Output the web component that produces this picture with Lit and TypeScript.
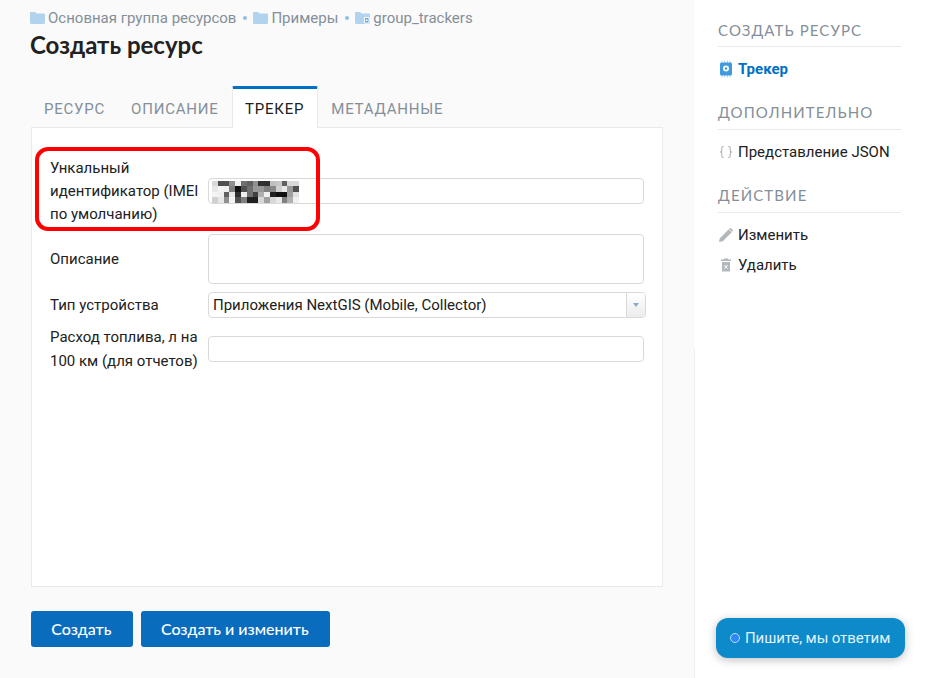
import { LitElement, html, css, svg } from 'lit';
import { customElement } from 'lit/decorators.js';

// hand-picked grey levels for the blurred IMEI value
const BLUR = [
  0xd8, 0x50, 0x50, 0x90, 0xf0, 0x70, 0x60, 0x90, 0x30, 0x30, 0xc0, 0xc8, 0x60, 0xd8, 0xd8,
  0xe8, 0xf4, 0xf0, 0x80, 0x10, 0x50, 0x70, 0x98, 0x98, 0x80, 0x88, 0xd0, 0xe8, 0x98, 0x50,
  0xf4, 0xf0, 0x60, 0xe8, 0x30, 0xf0, 0x70, 0x40, 0xb0, 0xf0, 0x20, 0x10, 0x10, 0xa0, 0xe0,
  0xd0, 0xe8, 0x90, 0xf4, 0x50, 0x80, 0x20, 0x20, 0xd8, 0xa0, 0xd8, 0xe8, 0x80, 0xb0, 0xf0,
];

const folder = (badge = false) => html`<svg class="crumb-icon" viewBox="0 0 15 12">
  <path d="M0 1.2C0 .5.5 0 1.2 0h4l1.3 1.6h7.3c.7 0 1.2.5 1.2 1.2v8c0 .7-.5 1.2-1.2 1.2H1.2C.5 12 0 11.5 0 10.8z" fill="#b1d3ee"/>
  ${badge ? svg`<rect x="9" y="5" width="5.5" height="6.5" rx="1" fill="#fff"/><rect x="10" y="6" width="3.5" height="4.5" fill="#5ea7de"/><circle cx="11.7" cy="8.2" r="1" fill="#fff"/>` : ''}
</svg>`;

@customElement('app-root')
export class AppRoot extends LitElement {
  static styles = css`
    :host {
      display: block;
      height: 678px;
      overflow: hidden;
      background: #fff;
      font-family: Roboto, sans-serif;
      font-size: 15px;
      color: #212121;
    }
    .page { display: flex; height: 678px; position: relative; }
    .main {
      width: 694px;
      box-sizing: border-box;
      background: #fafafa;
      padding: 9px 31px 0 31px;
      position: relative;
    }
    .main::after {
      content: '';
      position: absolute;
      right: -1px;
      top: 349px;
      bottom: 0;
      width: 1px;
      background: #eee;
    }
    .crumbs {
      display: flex;
      align-items: center;
      height: 18px;
      margin-left: -1px;
      font-size: 15px;
      color: #848f99;
    }
    .crumb-icon { width: 15px; height: 12px; margin-right: 3px; flex: none; }
    .sep { width: 4px; height: 4px; border-radius: 50%; background: #8fc0e6; margin: 0 6px 0 7px; }
    h1 {
      margin: 3px 0 0 -1px;
      font: 700 24px/30px Lato, sans-serif;
      color: #212121;
    }
    .tabs { display: flex; margin-top: 26px; height: 42px; position: relative; z-index: 1; }
    .tab {
      box-sizing: border-box;
      padding: 0 13px;
      line-height: 46px;
      font-size: 15px;
      letter-spacing: 0.78px;
      color: #848f99;
    }
    .tab.active {
      background: #fff;
      color: #212121;
      border: 1px solid #eaeaea;
      border-top: 3px solid #0070c5;
      border-bottom: 0;
      border-radius: 2px 2px 0 0;
      padding: 0 13px 0 12.5px;
      line-height: 41px;
      height: 42px;
    }
    .panel {
      box-sizing: border-box;
      height: 460px;
      margin-top: -1px;
      background: #fff;
      border: 1px solid #eaeaea;
      padding: 28px 18px 0;
    }
    .form { display: grid; grid-template-columns: 158px 1fr; row-gap: 8px; align-items: center; }
    .label { line-height: 23.25px; padding-top: 0.55px; margin-bottom: -0.55px; }
    .label.first { width: 150px; }
    .field {
      box-sizing: border-box;
      width: 436px;
      height: 26px;
      background: #fff;
      border: 1px solid #d9d9d9;
      border-radius: 4px;
    }
    .field.tall { height: 50px; }
    .imei { position: relative; }
    .blur {
      position: absolute;
      left: 3px;
      top: 2px;
      display: grid;
      grid-template-columns: repeat(15, 5.8px);
      grid-auto-rows: 5.5px;
    }
    .select {
      box-sizing: border-box;
      width: 438px;
      height: 26px;
      display: flex;
      background: #fff;
      border: 1px solid #d9d9d9;
      border-radius: 4px;
      line-height: 24px;
      padding-left: 4px;
    }
    .select span { flex: 1; }
    .arrow {
      width: 18px;
      border-left: 1px solid #d9d9d9;
      background: linear-gradient(#fff, #ececec);
      border-radius: 0 3px 3px 0;
      display: flex;
      align-items: center;
      justify-content: center;
    }
    .arrow i {
      border: 3.5px solid transparent;
      border-top: 4px solid #8fa6cc;
      border-bottom: 0;
    }
    .highlight {
      position: absolute;
      left: 35px;
      top: 147px;
      width: 285px;
      height: 84px;
      box-sizing: border-box;
      border: 4px solid #f00;
      border-radius: 13px;
    }
    .buttons { display: flex; gap: 8px; margin-top: 24px; }
    .btn {
      height: 36px;
      padding: 0 21.25px 0 20.25px;
      line-height: 36px;
      border-radius: 3px;
      background: #0a6cbd;
      color: #fff;
      font: 500 16px/36px Lato, sans-serif;
    }
    .side { flex: 1; padding: 0 24px 0 24px; }
    .side h2 {
      margin: 0;
      height: 29px;
      box-sizing: border-box;
      border-bottom: 1px solid #eaeaea;
      font: 400 15px/23px Lato, sans-serif;
      letter-spacing: 1.1px;
      color: #848f99;
    }
    .side h2:first-child { height: 47px; padding-top: 18px; line-height: 24px; }
    .item { display: flex; align-items: center; height: 30px; }
    .items { padding: 7px 0 17px; }
    .item svg { width: 14px; height: 14px; margin: 0 5px 0 1px; flex: none; overflow: visible; }
    .item.current { color: #0070c5; font-weight: 700; }
    .chat {
      position: absolute;
      left: 716px;
      top: 618px;
      width: 189px;
      height: 40px;
      border-radius: 12px;
      background: #0d8aca;
      box-shadow: 0 2px 10px rgba(0, 0, 0, 0.25);
      color: #e2f3fc;
      letter-spacing: -0.1px;
      display: flex;
      align-items: center;
      padding-left: 14px;
      box-sizing: border-box;
    }
    .dot {
      width: 8px;
      height: 8px;
      border-radius: 50%;
      background: #2f86f6;
      border: 1px solid #b8dcf5;
      margin-right: 5px;
    }
  `;

  render() {
    return html`
      <div class="page">
        <div class="main">
          <div class="crumbs">
            ${folder()}<span>Основная группа ресурсов</span><i class="sep"></i>
            ${folder()}<span>Примеры</span><i class="sep"></i>
            ${folder(true)}<span>group_trackers</span>
          </div>
          <h1>Создать ресурс</h1>
          <div class="tabs">
            <div class="tab">РЕСУРС</div>
            <div class="tab">ОПИСАНИЕ</div>
            <div class="tab active">ТРЕКЕР</div>
            <div class="tab">МЕТАДАННЫЕ</div>
          </div>
          <div class="panel">
            <div class="form">
              <div class="label first">Ункальный идентификатор (IMEI по умолчанию)</div>
              <div class="field imei">
                <div class="blur">
                  ${BLUR.map((v) => html`<div style="background: rgb(${v},${v},${v})"></div>`)}
                </div>
              </div>
              <div class="label">Описание</div>
              <div class="field tall"></div>
              <div class="label">Тип устройства</div>
              <div class="select"><span>Приложения NextGIS (Mobile, Collector)</span><div class="arrow"><i></i></div></div>
              <div class="label">Расход топлива, л на 100 км (для отчетов)</div>
              <div class="field"></div>
            </div>
          </div>
          <div class="buttons">
            <div class="btn">Создать</div>
            <div class="btn">Создать и изменить</div>
          </div>
        </div>
        <div class="side">
          <h2>СОЗДАТЬ РЕСУРС</h2>
          <div class="items">
            <div class="item current">
              <svg viewBox="0 0 14 14">
                <path d="M3 -1.500v17M5.500 -1.500v17M8.500 -1.500v17M11 -1.500v17" stroke="#9ccbee" stroke-width=".8"/>
                <rect x="1" y=".5" width="12" height="13" rx="1.500" fill="#3f9ade"/>
                <circle cx="7" cy="6.500" r="3" fill="#fff"/>
                <circle cx="7" cy="6.500" r="1.200" fill="#3f9ade"/>
              </svg>
              Трекер
            </div>
          </div>
          <h2>ДОПОЛНИТЕЛЬНО</h2>
          <div class="items">
            <div class="item">
              <svg viewBox="0 0 14 14" fill="none" stroke="#b3b8bd" stroke-width="1.200">
                <path d="M4.800 1.500H4C3 1.500 2.800 2 2.800 3v2.400C2.800 6.400 2.200 7 .8 7c1.400 0 2 .6 2 1.600V11c0 1 .2 1.500 1.200 1.500h.8"/>
                <path d="M9.200 1.500h.8c1 0 1.200.5 1.200 1.500v2.400c0 1 .6 1.600 2 1.600-1.400 0-2 .6-2 1.600V11c0 1-.2 1.500-1.200 1.500h-.8"/>
              </svg>
              Представление JSON
            </div>
          </div>
          <h2>ДЕЙСТВИЕ</h2>
          <div class="items">
            <div class="item">
              <svg viewBox="0 0 14 14">
                <path d="M0 14l.8-3.800L9.800 1.200l3 3-9 9zM10.800.3c.4-.4 1-.4 1.400 0l1.500 1.500c.4.4.4 1 0 1.400l-.6.6-3-3z" fill="#b3b8bd"/>
              </svg>
              Изменить
            </div>
            <div class="item">
              <svg viewBox="0 0 14 14">
                <path d="M5 .5h4l.5 1H12v1.500H2V1.500h2.500zM3 4h8v9.500H3z" fill="#b3b8bd"/>
                <path d="M5.500 7l3 3.500m0-3.500l-3 3.500" stroke="#fff" stroke-width="1"/>
              </svg>
              Удалить
            </div>
          </div>
        </div>
        <div class="highlight"></div>
        <div class="chat"><i class="dot"></i>Пишите, мы ответим</div>
      </div>
    `;
  }
}
